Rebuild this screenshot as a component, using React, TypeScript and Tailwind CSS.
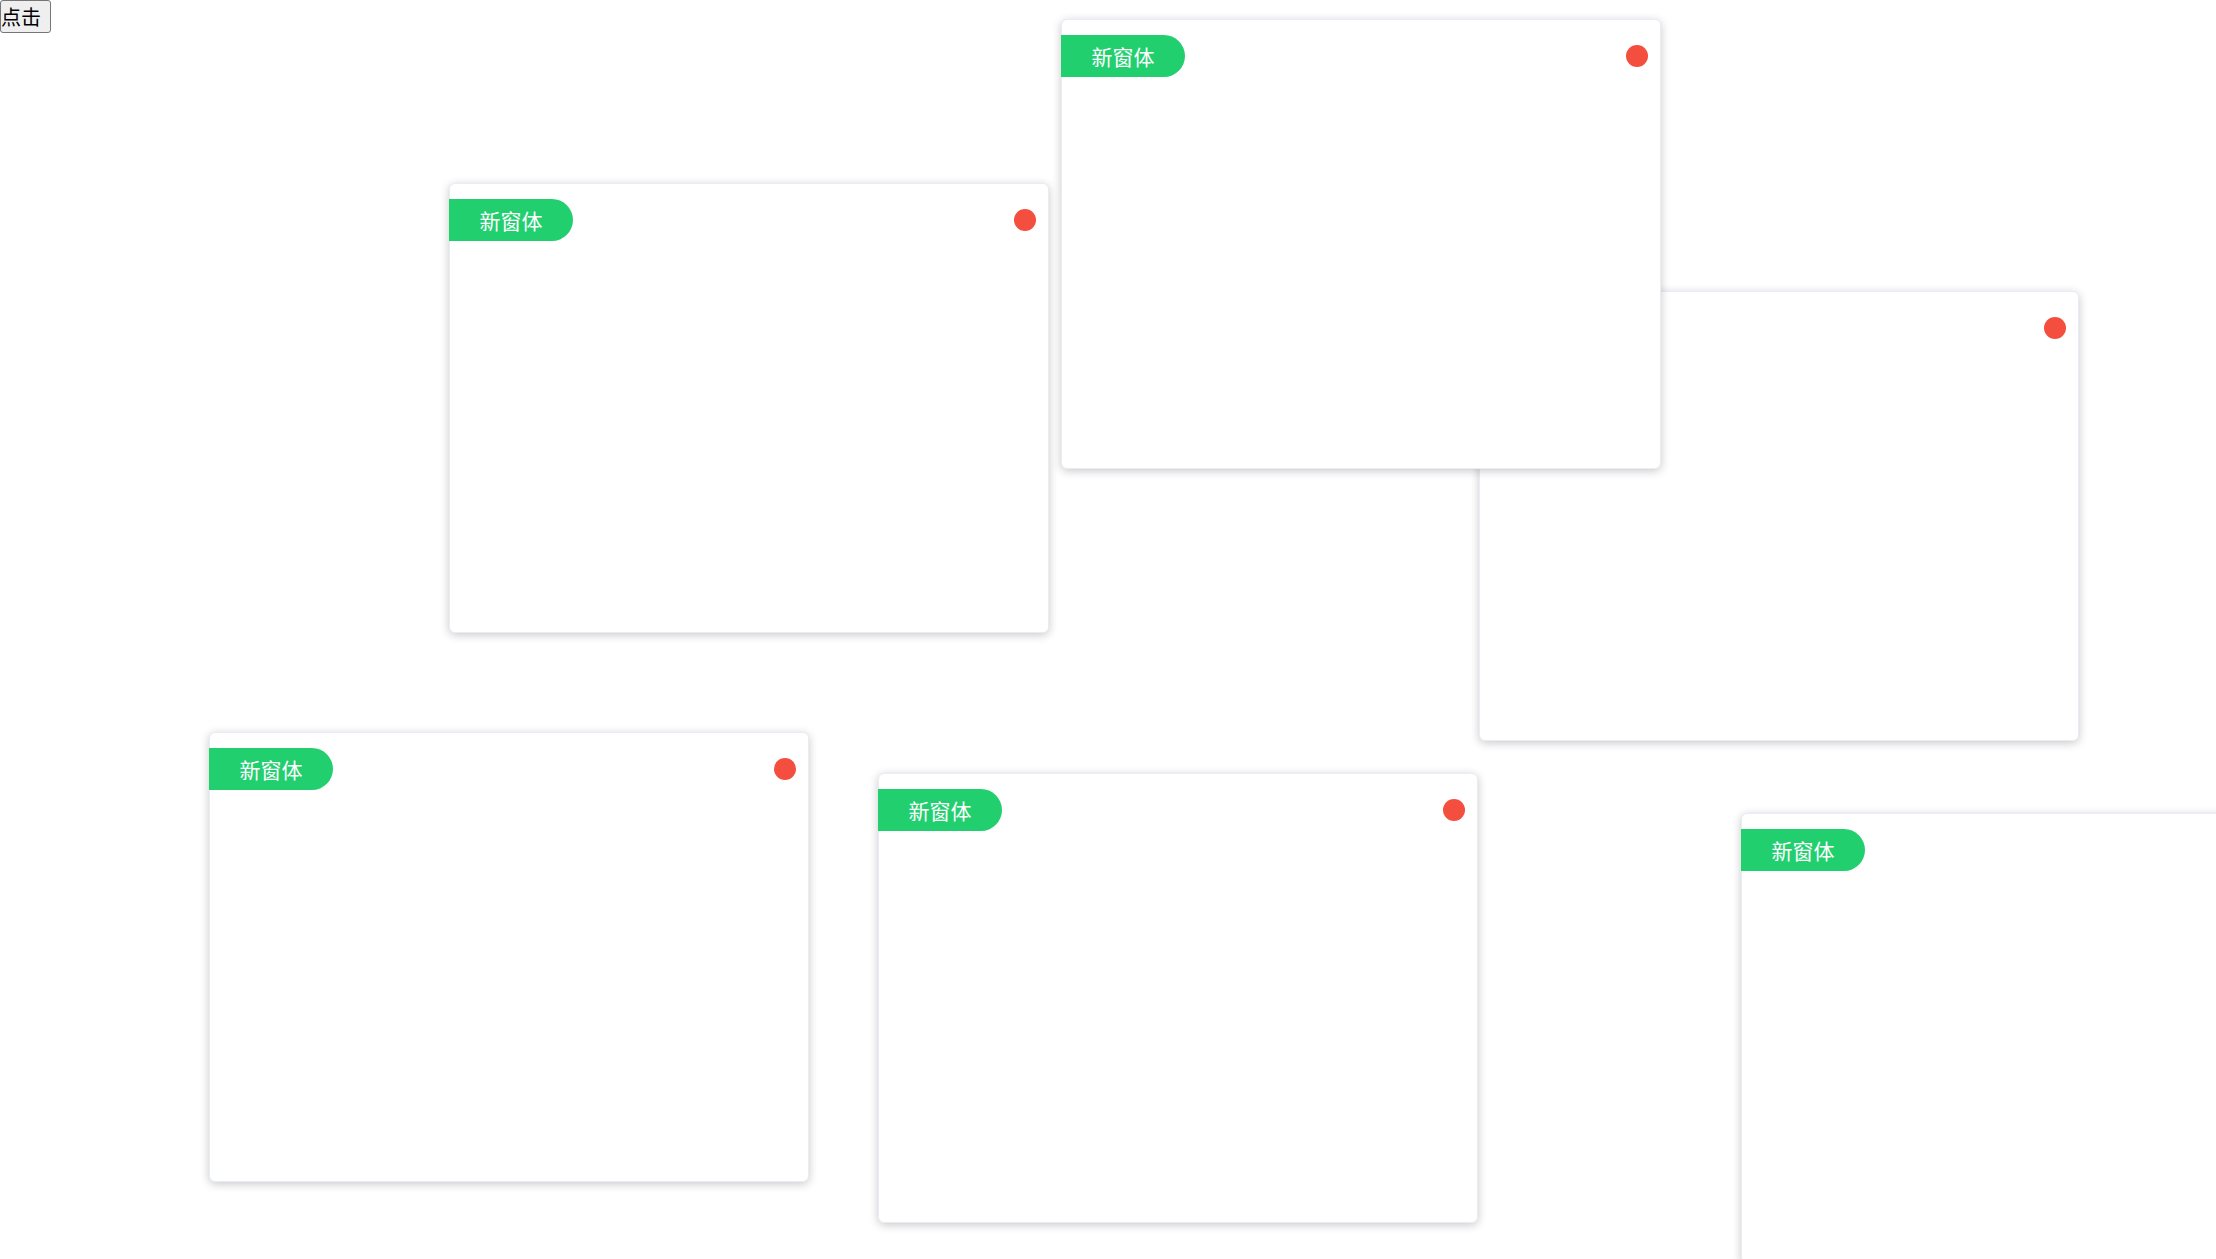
import React from 'react';

interface WinPos {
  id: number;
  left: number;
  top: number;
}

// window positions on the free canvas, in creation order (3 sits under 2)
const windows: WinPos[] = [
  { id: 1, left: 449, top: 183 },
  { id: 3, left: 1479, top: 291 },
  { id: 2, left: 1061, top: 19 },
  { id: 4, left: 209, top: 732 },
  { id: 5, left: 878, top: 773 },
  { id: 6, left: 1741, top: 813 },
];

const NewWindow: React.FC<{ pos: WinPos }> = ({ pos }) => (
  <div
    className="absolute w-[600px] h-[450px] bg-white rounded-md border border-[#e8ecf4] shadow-[0_2px_10px_rgba(0,0,0,0.22)]"
    style={{ left: pos.left, top: pos.top }}
  >
    <div className="flex items-center justify-between mt-[15px] pr-[12px]">
      <div className="w-[124px] h-[42px] -ml-px flex items-center justify-center rounded-r-full bg-[#22cf6f] text-white text-[21px] leading-none">
        新窗体
      </div>
      <span className="w-[22px] h-[22px] rounded-full bg-[#f44e3e]" />
    </div>
  </div>
);

export default function App() {
  return (
    <div
      className="relative w-screen h-screen overflow-hidden bg-white"
      style={{ fontFamily: '"Noto Sans CJK SC", "Microsoft YaHei", sans-serif' }}
    >
      <button className="absolute left-0 top-0 h-[33px] w-[51px] pl-0 pr-[6px] text-left text-[20px] leading-none text-black bg-[#efefef] border border-[#767676] rounded-[3px]">
        点击
      </button>
      {windows.map(w => (
        <NewWindow key={w.id} pos={w} />
      ))}
    </div>
  );
}
